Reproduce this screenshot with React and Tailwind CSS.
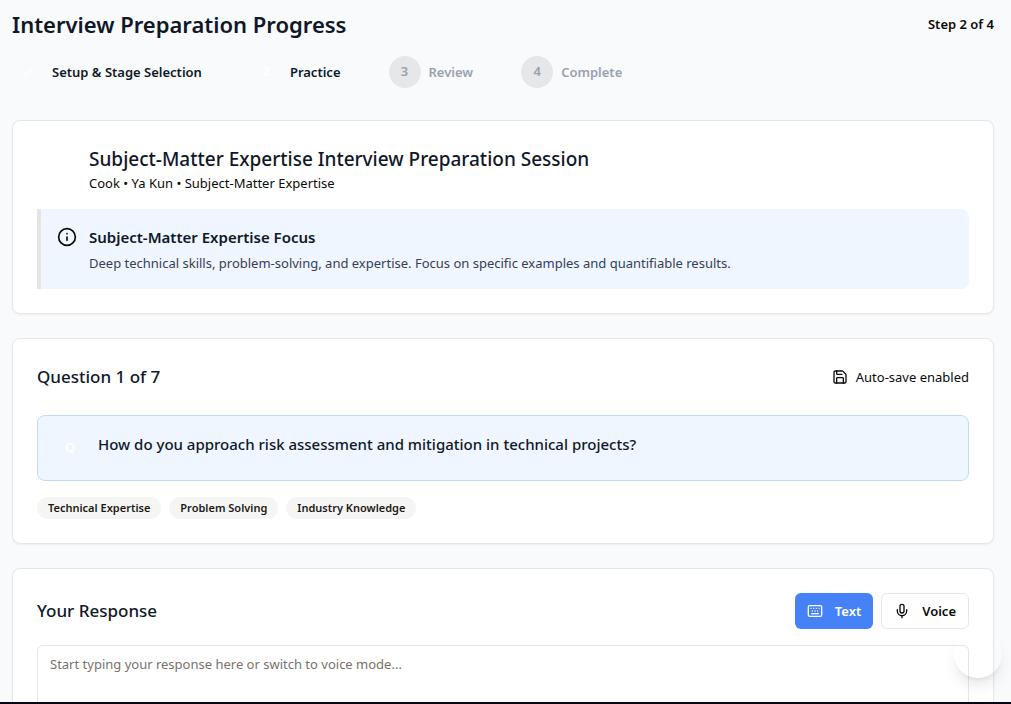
import { Check, Info, Save, Keyboard, Mic } from "lucide-react";

const steps = [
  { label: "Setup & Stage Selection", state: "done" },
  { label: "Practice", state: "active" },
  { label: "Review", state: "todo" },
  { label: "Complete", state: "todo" },
];

const tags = ["Technical Expertise", "Problem Solving", "Industry Knowledge"];

function Card({ children }) {
  return (
    <section className="rounded-lg border border-gray-200 bg-white p-6 shadow-xs">
      {children}
    </section>
  );
}

function Steps() {
  return (
    <ol className="mt-4 flex items-center gap-12">
      {steps.map((step, i) => {
        const todo = step.state === "todo";
        return (
          <li key={step.label} className="flex items-center gap-2">
            <span
              className={
                todo
                  ? "flex size-8 items-center justify-center rounded-full bg-gray-200 text-[13px] font-semibold text-gray-400"
                  : "flex size-8 items-center justify-center rounded-full text-[13px] font-semibold text-white"
              }
            >
              {step.state === "done" ? <Check className="size-4" /> : i + 1}
            </span>
            <span
              className={
                todo
                  ? "text-[13px] leading-5 font-semibold text-gray-400"
                  : "text-[13px] leading-5 font-semibold text-gray-900"
              }
            >
              {step.label}
            </span>
          </li>
        );
      })}
    </ol>
  );
}

export default function App() {
  return (
    <div className="flex h-screen flex-col overflow-hidden bg-gray-50 font-['Noto_Sans','Open_Sans',sans-serif] text-stone-950">
      <main className="flex min-h-0 flex-1 flex-col gap-6 overflow-hidden pt-2 pr-[17px] pl-3">
        <header className="mb-2">
          <div className="flex items-center justify-between">
            <h1 className="text-[22px] leading-8 font-semibold text-gray-900">
              Interview Preparation Progress
            </h1>
            <span className="text-[13px] leading-5 font-semibold">Step 2 of 4</span>
          </div>
          <Steps />
        </header>

        <Card>
          <div className="mb-4 pl-13">
            <h2 className="text-[19px] leading-7 font-medium text-gray-900">
              Subject-Matter Expertise Interview Preparation Session
            </h2>
            <p className="text-[13px] leading-5">Cook • Ya Kun • Subject-Matter Expertise</p>
          </div>
          <div className="flex gap-3 rounded-r-lg border-l-4 border-stone-200 bg-[#eff6ff] p-4">
            <Info className="mt-0.5 size-5 shrink-0" />
            <div>
              <h3 className="text-[15px] leading-6 font-semibold text-gray-900">
                Subject-Matter Expertise Focus
              </h3>
              <p className="mt-1 text-[13px] leading-5 text-gray-700">
                Deep technical skills, problem-solving, and expertise. Focus on specific examples
                and quantifiable results.
              </p>
            </div>
          </div>
        </Card>

        <Card>
          <div className="mb-6 flex items-center justify-between">
            <h2 className="text-[17px] leading-7 font-medium text-gray-900">Question 1 of 7</h2>
            <div className="flex items-center gap-2 text-[13px] leading-5">
              <Save className="size-4" />
              Auto-save enabled
            </div>
          </div>
          <div className="flex gap-3 rounded-lg border border-blue-200 bg-[#eff6ff] p-4">
            <span className="flex size-8 shrink-0 items-center justify-center text-[13px] font-semibold text-white">
              Q
            </span>
            <p className="text-[15px] leading-6 font-medium text-gray-900">
              How do you approach risk assessment and mitigation in technical projects?
            </p>
          </div>
          <ul className="mt-4 flex gap-2">
            {tags.map((tag) => (
              <li
                key={tag}
                className="rounded-full border border-transparent bg-stone-100 px-2.5 py-0.5 text-[11px] leading-4 font-semibold text-stone-900"
              >
                {tag}
              </li>
            ))}
          </ul>
        </Card>

        <Card>
          <div className="mb-4 flex items-center justify-between">
            <h2 className="text-[17px] leading-7 font-medium text-gray-900">
              <label htmlFor="response">Your Response</label>
            </h2>
            <div className="flex gap-2 text-[13px] leading-5 font-semibold">
              <button
                type="button"
                className="flex h-9 items-center gap-3 rounded-md bg-[#4682f7] px-3 text-white"
              >
                <Keyboard className="size-4" />
                Text
              </button>
              <button
                type="button"
                className="flex h-9 items-center gap-3 rounded-md border border-gray-200 bg-white px-3"
              >
                <Mic className="size-4" />
                Voice
              </button>
            </div>
          </div>
          <textarea
            id="response"
            placeholder="Start typing your response here or switch to voice mode..."
            className="block h-48 w-full resize-none rounded-md border border-gray-200 px-3 py-2 text-[13px] leading-5 placeholder:text-stone-500"
          />
        </Card>
      </main>
      <button
        type="button"
        aria-label="Open assistant"
        className="fixed right-[9px] bottom-[26px] size-12 rounded-full shadow-lg"
      />
      <div className="h-0.5 shrink-0 bg-gray-950" />
    </div>
  );
}
